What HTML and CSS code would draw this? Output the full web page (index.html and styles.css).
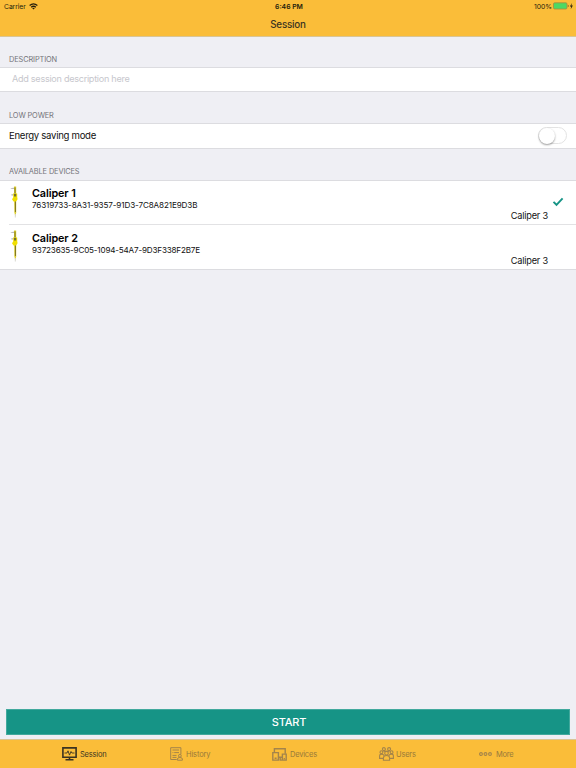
FILE: index.html
```
<!DOCTYPE html>
<html lang="en">
    <head>
        <meta charset="utf-8">
        <title>Session</title>
        <link rel="stylesheet" href="styles.css">
    </head>
    <body>
        <header>
            <div class="status">
                <div class="carrier">
                    <span>Carrier</span>
                    <svg width="9" height="7" viewBox="0 0 9 7" fill="none" stroke="#241d0c" stroke-width="1.3">
                        <path d="M.6 2.6Q4.5-.8 8.4 2.6M2.2 4.2Q4.5 2.2 6.8 4.2"/>
                        <path d="M3.2 5.2Q4.5 4.2 5.8 5.2L4.5 6.6Z" fill="#241d0c" stroke="none"/>
                    </svg>
                </div>
                <div class="time">6:46 PM</div>
                <div class="power">
                    <span>100%</span>
                    <svg width="21" height="8" viewBox="0 0 21 8">
                        <rect x=".5" y=".8" width="13.5" height="6.2" rx="1.2" fill="#4cd964" stroke="#a88a3c" stroke-width=".8"/>
                        <path d="M14.8 2.8v2.2q1-.3 1-1.1t-1-1.1z" fill="#836520"/>
                        <path d="M18.9.9 16.9 4.4h1.3l-.5 2.8 2.2-3.8h-1.5z" fill="#241d0c"/>
                    </svg>
                </div>
            </div>
            <h1>Session</h1>
        </header>

        <main>
            <h2>DESCRIPTION</h2>
            <div class="group">
                <div class="cell placeholder"><span>Add session description here</span></div>
            </div>

            <h2>LOW POWER</h2>
            <div class="group">
                <div class="cell">
                    <span>Energy saving mode</span>
                    <div class="switch"></div>
                </div>
            </div>

            <h2>AVAILABLE DEVICES</h2>
            <div class="group">
                <div class="device">
                    <svg class="caliper" width="12" height="33" viewBox="0 0 12 33">
                        <path d="M1.2 2.2 6 1.5v1.6H3zM1.8 8.7l4.2-1.5v1.6L3 9.8z" fill="#bcbcbc"/>
                        <path d="M5 .5h2.2v26l-.9 4-.9-4z" fill="#ded02e"/>
                        <path d="M6 1.5v5.5M6.4 15v11" stroke="#7c721e" stroke-width="1"/>
                        <path d="M4.2 7.5h4v3.5l.4 2.2-1.6 2.3H4.5l-1.5-2.3 1.2-1.8z" fill="#f0df00"/>
                        <path d="M5 7.8h2.2v2.7H5z" fill="#77702c"/>
                        <path d="M6.3 28v3.5" stroke="#d8d8d0" stroke-width="1"/>
                    </svg>
                    <div class="info">
                        <h3>Caliper 1</h3>
                        <p class="uuid">76319733-8A31-9357-91D3-7C8A821E9D3B</p>
                    </div>
                    <span class="model">Caliper 3</span>
                    <svg class="check" width="12" height="10" viewBox="0 0 12 10" fill="none" stroke="#169486" stroke-width="1.9">
                        <path d="M1.5 4.9 4.5 7.8 10.6 1.4"/>
                    </svg>
                </div>
                <div class="device">
                    <svg class="caliper" width="12" height="33" viewBox="0 0 12 33">
                        <path d="M1.2 2.2 6 1.5v1.6H3zM1.8 8.7l4.2-1.5v1.6L3 9.8z" fill="#bcbcbc"/>
                        <path d="M5 .5h2.2v26l-.9 4-.9-4z" fill="#ded02e"/>
                        <path d="M6 1.5v5.5M6.4 15v11" stroke="#7c721e" stroke-width="1"/>
                        <path d="M4.2 7.5h4v3.5l.4 2.2-1.6 2.3H4.5l-1.5-2.3 1.2-1.8z" fill="#f0df00"/>
                        <path d="M5 7.8h2.2v2.7H5z" fill="#77702c"/>
                        <path d="M6.3 28v3.5" stroke="#d8d8d0" stroke-width="1"/>
                    </svg>
                    <div class="info">
                        <h3>Caliper 2</h3>
                        <p class="uuid tight">93723635-9C05-1094-54A7-9D3F338F2B7E</p>
                    </div>
                    <span class="model">Caliper 3</span>
                </div>
            </div>
        </main>

        <button type="button" class="start">START</button>

        <nav>
            <a class="tab session">
                <svg width="15" height="14" viewBox="0 0 15 14" fill="none" stroke="#3b3321" stroke-width="1.6">
                    <path d="M.9.9h13.2v9.4H.9z"/>
                    <path d="M2.5 6H5l1-2.2 1.5 4.3L9 4.5 9.9 6h2.6" stroke-width=".9"/>
                    <path d="M7.5 10.3v2M3.5 12.8h8"/>
                </svg>
                <span>Session</span>
            </a>
            <a class="tab history">
                <svg width="13" height="14" viewBox="0 0 13 14" fill="none" stroke="#a4844a" stroke-width="1">
                    <path d="M6.7 12.5H.7V.7h10.2v6.6M2.5 3h6.6M2.5 8.4h4M2.5 10.4h4M4.2 5.6H9M2.5 5.6h.9"/>
                    <circle cx="9.9" cy="8.8" r="1.4"/>
                    <path d="M7.4 13.2v-1.1q0-1.6 2.5-1.6t2.5 1.6v1.1z"/>
                </svg>
                <span>History</span>
            </a>
            <a class="tab devices">
                <svg width="15" height="13" viewBox="0 0 15 13" fill="none" stroke="#a4844a" stroke-width="1.4">
                    <path d="M2.4 4.4V.8h10.8v5M6.4 9.3h3.8"/>
                    <path d="M.8 4.6h5.6v7.5H.8zM2.6 10.3h2"/>
                    <path d="M10.4 6.1h3.8v6h-3.8zM8.2 9.3v2.8h2.2M11.7 10.6h1.2"/>
                </svg>
                <span>Devices</span>
            </a>
            <a class="tab users">
                <svg width="15" height="14" viewBox="0 0 15 14" fill="none" stroke="#a4844a" stroke-width="1.1">
                    <circle cx="4.9" cy="2.1" r="1.5"/>
                    <circle cx="10.1" cy="2.1" r="1.5"/>
                    <circle cx="2.4" cy="5.2" r="1.4"/>
                    <circle cx="12.6" cy="5.2" r="1.4"/>
                    <circle cx="7.5" cy="6.2" r="1.8"/>
                    <path d="M4.4 13.2v-2.1q0-2.6 3.1-2.6t3.1 2.6v2.1zM4.2 11.4H.6V9q0-1.9 2.1-1.9 1.7 0 2.3 1.5M10.8 11.4h3.6V9q0-1.9-2.1-1.9-1.7 0-2.3 1.5M4.5 4.4q1.7-.5 3 0 1.3-.5 3 0"/>
                </svg>
                <span>Users</span>
            </a>
            <a class="tab more">
                <svg width="13" height="4" viewBox="0 0 13 4" fill="none" stroke="#a4844a" stroke-width="1.1">
                    <circle cx="2" cy="2" r="1.4"/>
                    <circle cx="6.5" cy="2" r="1.4"/>
                    <circle cx="11" cy="2" r="1.4"/>
                </svg>
                <span>More</span>
            </a>
        </nav>
    </body>
</html>
```
FILE: styles.css
```
* {
    box-sizing: border-box;
}

body {
    margin: 0;
    height: 768px;
    display: flex;
    flex-direction: column;
    overflow: hidden;
    background-color: #efeff4;
    color: #111;
    font-family: Inter, "Liberation Sans", sans-serif;
}

h1, h2, h3, p {
    margin: 0;
    font-weight: normal;
}

svg {
    display: block;
    flex: none;
}

span {
    white-space: nowrap;
}

header {
    height: 37px;
    background-color: #fabd39;
    border-bottom: 1px solid #d9c596;
}

.status {
    display: grid;
    grid-template-columns: 1fr auto 1fr;
    height: 12px;
    padding: 0 2px 0 4px;
    align-items: center;
    font-size: 6.8px;
    color: #241d0c;
}

.carrier, .power {
    display: flex;
    align-items: center;
}

.carrier {
    gap: 3px;
}

.carrier span {
    letter-spacing: -.08px;
}

.power {
    justify-content: flex-end;
    gap: 1px;
}

.time {
    font-weight: 600;
}

h1 {
    padding-top: 1px;
    font-size: 9.8px;
    font-weight: 500;
    line-height: 23px;
    letter-spacing: -.2px;
    text-align: center;
    color: #3b3321;
}

main {
    flex: 1;
}

h2 {
    height: 31px;
    padding: 18px 9px 0;
    font-size: 7.4px;
    line-height: 10px;
    letter-spacing: -.12px;
    color: #74747a;
}

h2:first-child {
    height: 30px;
}

.group:nth-child(2) + h2 {
    padding-top: 19px;
}

.group {
    background-color: #fff;
    border: solid #dcdce0;
    border-width: 1px 0;
}

.cell {
    display: flex;
    align-items: center;
    justify-content: space-between;
    height: 24px;
    padding: 0 9px 1px;
    font-size: 9.6px;
    letter-spacing: -.3px;
}

.placeholder {
    height: 23px;
    padding: 0 12px 2px;
    font-size: 9.1px;
    color: #c7c7cd;
    letter-spacing: -.28px;
}

.switch {
    width: 29px;
    height: 17px;
    border: 1px solid #e3e3e3;
    border-radius: 9px;
}

.switch::before {
    content: "";
    display: block;
    width: 16px;
    height: 16px;
    border-radius: 50%;
    background-color: #fff;
    box-shadow: 0 1px 2px rgba(0, 0, 0, .4);
}

.device {
    position: relative;
    display: flex;
    height: 44px;
    padding: 5px 9px 0;
}

.device + .device::before {
    content: "";
    position: absolute;
    top: -1px;
    left: 9px;
    right: 0;
    border-top: 1px solid #e2e2e4;
}

.info {
    flex: 1;
    padding-left: 11px;
}

h3 {
    padding-top: 1px;
    font-size: 10.8px;
    font-weight: 600;
    line-height: 13px;
    letter-spacing: -.1px;
    color: #000;
}

.uuid {
    font-size: 8.1px;
    line-height: 10px;
    letter-spacing: -.12px;
}

.tight {
    letter-spacing: -.18px;
}

.device + .device .info {
    padding-top: 1px;
}

.model {
    align-self: flex-end;
    margin-right: 19px;
    font-size: 9.2px;
    line-height: 18px;
    letter-spacing: -.2px;
}

.device + .device .model {
    line-height: 17px;
}

.check {
    position: absolute;
    top: 16px;
    right: 12px;
}

.start {
    height: 26px;
    margin: 0 6px 4px;
    padding: 0 0 0 2px;
    border: 1px solid #42a99d;
    background-color: #169486;
    color: #fff;
    font: 500 11px/24px Inter, sans-serif;
    letter-spacing: -.2px;
}

nav {
    display: grid;
    grid-template-columns: 138px 104px 106px 104px 1fr;
    height: 29px;
    border-top: 1px solid #d9c596;
    background-color: #fabd39;
    font-size: 7.5px;
    letter-spacing: -.2px;
    color: #98793a;
}

.tab {
    display: flex;
    align-items: center;
    gap: 3px;
}

.session {
    padding-left: 62px;
    color: #3b3321;
}

.history {
    padding-left: 32px;
    letter-spacing: -.15px;
}

.devices {
    padding-left: 30px;
}

.users {
    padding-left: 31px;
    gap: 2px;
}

.more {
    padding-left: 27px;
    gap: 4px;
}
```
